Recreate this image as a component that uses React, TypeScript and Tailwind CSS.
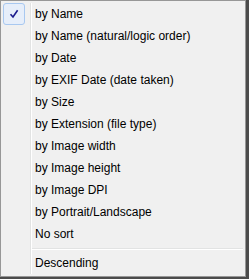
import React from "react";

const items = [
  "by Name",
  "by Name (natural/logic order)",
  "by Date",
  "by EXIF Date (date taken)",
  "by Size",
  "by Extension (file type)",
  "by Image width",
  "by Image height",
  "by Image DPI",
  "by Portrait/Landscape",
  "No sort",
];

function Row({ label, checked }: { label: string; checked?: boolean }) {
  return (
    <div className="flex h-[22px] items-center">
      <div className="flex h-[22px] w-[32px] shrink-0 items-center">
        {checked && (
          <div className="flex h-[22px] w-[22px] items-center justify-center rounded-[3px] border border-[#a8c8f0] bg-[#e6eefa]">
            <svg width="10" height="10" viewBox="0 0 10 10">
              <path d="M1.5 5.2 L4 8 L8.6 1.2" fill="none" stroke="#1a1a8c" strokeWidth="1.6" />
            </svg>
          </div>
        )}
      </div>
      <span className="text-[12px] leading-none text-black">{label}</span>
    </div>
  );
}

export default function App() {
  return (
    <div
      className="h-[279px] w-[249px] bg-[#4b4b4b]"
      style={{ fontFamily: '"Liberation Sans", Arial, sans-serif' }}
    >
      <div className="h-[277px] w-[246px] border border-[#979797] bg-[#f0f0f0] p-[2px]">
        <div className="h-full bg-[linear-gradient(to_right,transparent_27px,#e2e3e3_27px,#e2e3e3_28px,#ffffff_28px,#ffffff_29px,transparent_29px)]">
          {items.map((l, i) => (
            <Row key={l} label={l} checked={i === 0} />
          ))}
          <div className="flex h-[7px] items-center pl-[29px]">
            <div className="h-[2px] w-full border-t border-[#e2e3e3] bg-white" />
          </div>
          <Row label="Descending" />
        </div>
      </div>
    </div>
  );
}
